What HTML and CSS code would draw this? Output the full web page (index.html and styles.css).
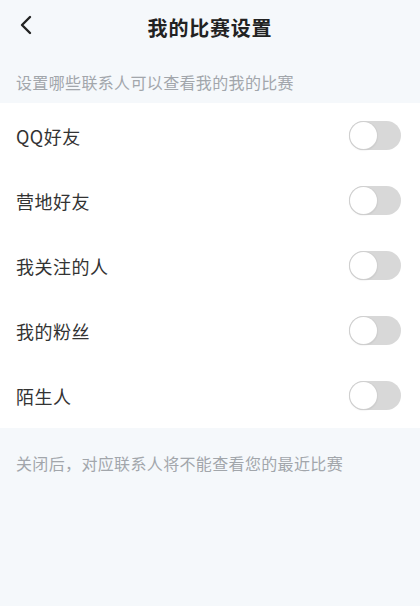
FILE: index.html
```html
<!DOCTYPE html>
<html lang="zh-CN">
<head>
<meta charset="utf-8">
<link rel="stylesheet" href="styles.css">
</head>
<body>
<div class="page">
  <header class="header">
    <span class="back">
      <svg width="14" height="20" viewBox="0 0 14 20"><path d="M11 2 L3 10 L11 18" fill="none" stroke="#222" stroke-width="2.4" stroke-linecap="round" stroke-linejoin="round"/></svg>
    </span>
    <h1 class="title">我的比赛设置</h1>
  </header>
  <p class="hint top">设置哪些联系人可以查看我的我的比赛</p>
  <ul class="list">
    <li class="row"><span class="label">QQ好友</span><span class="switch"><span class="knob"></span></span></li>
    <li class="row"><span class="label">营地好友</span><span class="switch"><span class="knob"></span></span></li>
    <li class="row"><span class="label">我关注的人</span><span class="switch"><span class="knob"></span></span></li>
    <li class="row"><span class="label">我的粉丝</span><span class="switch"><span class="knob"></span></span></li>
    <li class="row"><span class="label">陌生人</span><span class="switch"><span class="knob"></span></span></li>
  </ul>
  <p class="hint bottom">关闭后，对应联系人将不能查看您的最近比赛</p>
</div>
</body>
</html>
```
FILE: styles.css
```css
html, body {
  margin: 0;
  padding: 0;
  background: #f5f8fb;
}
body {
  font-family: "Noto Sans CJK SC", "Noto Sans", sans-serif;
  width: 420px;
  height: 606px;
  overflow: hidden;
}
.page {
  display: flex;
  flex-direction: column;
}
.header {
  height: 54px;
  display: flex;
  align-items: center;
  justify-content: center;
  position: relative;
}
.back {
  position: absolute;
  left: 19px;
  top: 15px;
  display: flex;
}
.title {
  margin: 0;
  font-size: 20px;
  font-weight: 700;
  color: #222;
  letter-spacing: 0.8px;
}
.hint {
  margin: 0;
  padding: 0 16px;
  font-size: 16px;
  color: #a2a6ab;
  letter-spacing: 0.35px;
  line-height: 24px;
}
.hint.top {
  padding-top: 16px;
  padding-bottom: 9px;
}
.hint.bottom {
  padding-top: 23px;
}
.list {
  list-style: none;
  margin: 0;
  padding: 0;
  background: #fff;
}
.row {
  height: 65px;
  display: flex;
  align-items: center;
  justify-content: space-between;
  padding: 0 19px 0 16px;
}
.label {
  font-size: 18px;
  color: #333;
  letter-spacing: 0.5px;
}
.switch {
  width: 52px;
  height: 29px;
  border-radius: 15px;
  background: #d8d8d8;
  display: flex;
  align-items: center;
  padding: 0 1px;
  box-sizing: border-box;
}
.knob {
  width: 27px;
  height: 27px;
  border-radius: 50%;
  background: #fff;
  box-shadow: 0 0 0 1px #d0d0d0, 0 1px 2px rgba(0,0,0,0.15);
}
```
